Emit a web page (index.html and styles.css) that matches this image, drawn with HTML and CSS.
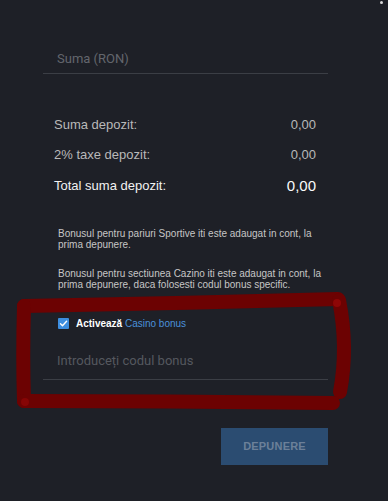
FILE: index.html
```html
<!DOCTYPE html>
<html lang="ro">
<head>
<meta charset="utf-8">
<link rel="stylesheet" href="styles.css">
</head>
<body>
<div class="page">
  <span class="dot"></span>
  <form class="deposit">
    <div class="field field-amount">
      <input class="field-input" type="text" placeholder="Suma (RON)">
    </div>
    <div class="summary">
      <div class="row"><span>Suma depozit:</span><span>0,00</span></div>
      <div class="row"><span>2% taxe depozit:</span><span>0,00</span></div>
      <div class="row row-total"><span>Total suma depozit:</span><span class="total-val">0,00</span></div>
    </div>
    <p class="note note-first">Bonusul pentru pariuri Sportive iti este adaugat in cont, la prima depunere.</p>
    <p class="note">Bonusul pentru sectiunea Cazino iti este adaugat in cont, la prima depunere, daca folosesti codul bonus specific.</p>
    <label class="check">
      <span class="box"><svg width="11" height="11" viewBox="0 0 11 11"><path d="M2.5 5.8 L4.5 7.8 L8.6 3.2" fill="none" stroke="#fff" stroke-width="1.4" stroke-linecap="round" stroke-linejoin="round"/></svg></span>
      <span class="check-text"><b>Activează</b> <span class="link">Casino bonus</span></span>
    </label>
    <div class="field field-bonus">
      <input class="field-input" type="text" placeholder="Introduceți codul bonus">
    </div>
    <div class="actions">
      <button class="btn" type="button">DEPUNERE</button>
    </div>
  </form>
  <svg class="marker" width="388" height="501" viewBox="0 0 388 501">
    <g fill="none" stroke="#6c0202" stroke-width="14" stroke-linecap="round" stroke-linejoin="round">
      <path d="M24 306 C 120 304, 240 302, 338 299"/>
      <path d="M339 300 C 345 330, 346 360, 340 392"/>
      <path d="M24 306 C 23 340, 23 370, 24 401"/>
      <path d="M24 401 C 120 401, 240 402, 333 403"/>
    </g>
    <circle cx="337" cy="303" r="4" fill="#8e0606"/>
    <circle cx="25" cy="402" r="4" fill="#860505"/>
  </svg>
</div>
</body>
</html>
```
FILE: styles.css
```css
* { box-sizing: border-box; }
html, body { margin: 0; padding: 0; }
body {
  background: #1e2027;
  width: 388px;
  height: 501px;
  overflow: hidden;
  font-family: "Liberation Sans", Arial, sans-serif;
}
.page {
  position: relative;
  width: 388px;
  height: 501px;
}
.dot {
  position: absolute;
  top: 1px;
  left: 380px;
  width: 3px;
  height: 3px;
  border-radius: 50%;
  background: #d8d8d8;
}
.deposit {
  margin: 0;
  padding: 44px 60px 0 43px;
  display: flex;
  flex-direction: column;
}
.field {
  border-bottom: 1px solid #3b3e45;
  height: 30px;
  display: flex;
  align-items: center;
}
.field-input {
  background: transparent;
  border: 0;
  outline: none;
  padding: 0 0 0 14px;
  width: 100%;
  font-family: Roboto, "Liberation Sans", sans-serif;
  font-size: 13px;
  color: #ccc;
}
.field-input::placeholder { color: #63666d; }
.field-bonus .field-input::placeholder { color: #55585f; }
.summary {
  margin-top: 35px;
  padding: 0 12px 0 11px;
  display: flex;
  flex-direction: column;
}
.row {
  display: flex;
  justify-content: space-between;
  align-items: center;
  height: 30.5px;
  font-size: 13px;
  color: #b9b9b9;
}
.row-total { color: #f2f2f2; }
.total-val { font-size: 15px; color: #fafafa; }
.note {
  margin: 0;
  padding-left: 15px;
  font-size: 10px;
  line-height: 11.5px;
  color: #c6c6c6;
}
.note-first { margin-top: 27px; }
.note + .note { margin-top: 17px; }
.check {
  margin-top: 27px;
  padding-left: 15px;
  display: flex;
  align-items: center;
  gap: 7px;
  font-size: 10px;
}
.box {
  width: 11px;
  height: 11px;
  border-radius: 1px;
  background: #3d8ee0;
  display: flex;
}
.check-text b { color: #fff; font-weight: bold; }
.link { color: #4a90da; }
.field-bonus { margin-top: 13px; height: 38px; }
.actions {
  margin-top: 48px;
  display: flex;
  justify-content: flex-end;
}
.btn {
  width: 107px;
  height: 37px;
  border: 0;
  background: #2b4c71;
  color: #6c8099;
  font-family: "Liberation Sans", Arial, sans-serif;
  font-weight: bold;
  font-size: 11px;
  letter-spacing: 0.2px;
}
.marker {
  position: absolute;
  top: 0;
  left: 0;
  pointer-events: none;
}
```
